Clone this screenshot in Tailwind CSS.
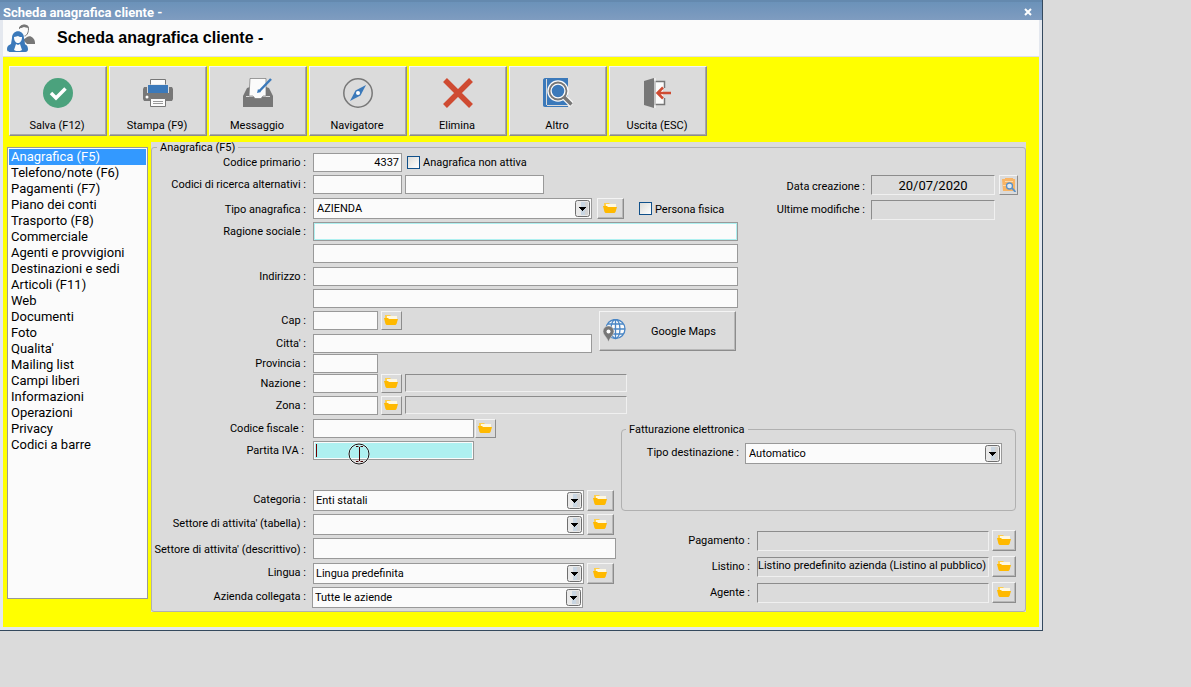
<!DOCTYPE html>
<html lang="it">
<head>
    <meta charset="UTF-8">
    <meta name="viewport" content="width=device-width, initial-scale=1.0">
    <title>Scheda anagrafica cliente</title>
    <script src="https://cdn.jsdelivr.net/npm/@tailwindcss/browser@4"></script>
</head>
<body class="min-h-screen bg-[#dbdbdb] text-black text-[11px] leading-[13px] font-['Tahoma','Roboto','DejaVu_Sans',sans-serif]">

    <!-- Shared icons -->
    <svg class="hidden">
        <symbol id="folder" viewBox="0 0 14 11">
            <path fill="#ffcf4a" d="M1 0h5l1 1h6v4H1z"/>
            <path fill="#fff8e0" d="M3 1h10v3H3z"/>
            <path fill="#ffb900" d="M0 3h4l1 1h9l-1.500 5-1 1H2.500l-1-1z"/>
        </symbol>
        <symbol id="arrow" viewBox="0 0 15 17">
            <rect x=".5" y=".5" width="14" height="16" rx="2" fill="#e9e9e9" stroke="#6e6e6e"/>
            <path fill="#c9d6e2" d="M6 2h4v13H6z"/>
            <path fill="#d3d3d3" d="M10 2h3v13h-3z"/>
            <path fill="#000" d="M4 7h7v1h-1v1H9v1H8v1H7v-1H6V9H5V8H4z"/>
        </symbol>
    </svg>

    <div class="mr-[148px] border-r border-b border-[#34495e]">
        <!-- Title bar -->
        <div class="flex h-5 items-center justify-between border-t-2 border-[#6489ae] bg-linear-to-b from-[#6b92b9] to-[#7f9cc0] pt-0.5 pr-2 pl-[3px]">
            <span class="text-[13px] font-bold text-white">Scheda anagrafica cliente -</span>
            <button type="button" aria-label="Chiudi" class="flex h-3 w-3 items-center justify-center">
                <svg class="h-2 w-2" viewBox="0 0 8 8"><path d="M1 1l6 6M7 1L1 7" stroke="#fff" stroke-width="2"/></svg>
            </button>
        </div>

        <div class="border-x-[3px] border-b-[3px] border-[#e4e8ef]">
            <!-- Header -->
            <header class="flex h-[37px] items-center border-b border-[#e0e0e8] bg-[#fbfbfb] pl-1">
                <svg class="h-7 w-7 shrink-0" viewBox="0 0 28 28">
                    <path fill="#777" d="M20 13c2-1 4-1 6 1 2 2 2 4 2 6h-8l-4-4z"/>
                    <path fill="#fbfbfb" stroke="#777" d="M12.500 5c0-5 9-5 9 0 0 4-2 7-4 7"/>
                    <path fill="#777" d="M12 4c1-4 9-5 10 0-3 0-4-1-5-1-2 1-3 1-5 1z"/>
                    <path fill="#3b79ba" d="M5 14c0-9 12-9 12 0l1 6H4zM0 25c0-4 4-5 7-6h8c3 1 6 2 6 6 0 3-2 3-4 3H4c-2 0-4 0-4-3z"/>
                    <path fill="#fbfbfb" d="M7 13c2 0 3-1 4-1 1 1 3 1 4 1 0 4-2 6-4 6s-4-2-4-6zM9 20l2 1 2-1 2 6-2 1H9l-2-1z"/>
                </svg>
                <h1 class="ml-[22px] font-['Liberation_Sans',Arial,sans-serif] text-base font-bold">Scheda anagrafica cliente -</h1>
            </header>

            <div class="bg-[#ff0] pt-[9px] pb-[15px]">
                <!-- Toolbar -->
                <div class="flex gap-0.5 pl-1.5">
                    <button type="button" class="flex h-[70px] w-[98px] flex-col items-center justify-between border border-t-[#f4f4f4] border-r-[#8c8c8c] border-b-[#8c8c8c] border-l-[#f4f4f4] bg-[#dbdbdb] pt-[11px] pb-[3px] shadow-[inset_-1px_-1px_0_#a8a8a8]">
                        <svg class="h-[30px] w-[30px]" viewBox="0 0 30 30"><circle cx="15" cy="15" r="15" fill="#4ba27d"/><path d="M8 15l5 5 9.500-9.500" fill="none" stroke="#fff" stroke-width="3.500"/></svg>
                        <span class="pr-0.5">Salva (F12)</span>
                    </button>
                    <button type="button" class="flex h-[70px] w-[98px] flex-col items-center justify-between border border-t-[#f4f4f4] border-r-[#8c8c8c] border-b-[#8c8c8c] border-l-[#f4f4f4] bg-[#dbdbdb] pt-[11px] pb-[3px] shadow-[inset_-1px_-1px_0_#a8a8a8]">
                        <svg class="h-[30px] w-[30px]" viewBox="0 0 30 30">
                            <path fill="#777" d="M1 9h3v6h22V9h3l1 2v10l-1 2H1l-1-2V11z"/>
                            <path fill="#fbfbfb" stroke="#777" d="M7.500 6.500v-5h15v5"/>
                            <path fill="#3b79ba" d="M5 7h20v8H5z"/>
                            <path fill="#fbfbfb" stroke="#777" d="M7.500 20.500h15v8h-15z"/>
                            <path stroke="#999" d="M10 23.500h10M10 25.500h10"/>
                            <circle cx="4" cy="19" r="1.500" fill="#fff"/>
                        </svg>
                        <span class="pr-0.5">Stampa (F9)</span>
                    </button>
                    <button type="button" class="flex h-[70px] w-[98px] flex-col items-center justify-between border border-t-[#f4f4f4] border-r-[#8c8c8c] border-b-[#8c8c8c] border-l-[#f4f4f4] bg-[#dbdbdb] pt-[11px] pb-[3px] shadow-[inset_-1px_-1px_0_#a8a8a8]">
                        <svg class="h-[30px] w-[30px]" viewBox="0 0 30 30">
                            <path fill="#777" d="M4 10l3-1v9H3v1h24v-1h-4V9l3 1 4 8v11H0V18z"/>
                            <path fill="#fbfbfb" stroke="#777" stroke-width=".7" d="M7 .5h16V18h-3l-2 2.500h-6L10 18H6z"/>
                            <path stroke="#3b79ba" stroke-width="2.500" d="M16 13.500L28 1"/>
                            <path fill="#3b79ba" d="M14 15l1-4 3 3z"/>
                        </svg>
                        <span class="pr-0.5">Messaggio</span>
                    </button>
                    <button type="button" class="flex h-[70px] w-[98px] flex-col items-center justify-between border border-t-[#f4f4f4] border-r-[#8c8c8c] border-b-[#8c8c8c] border-l-[#f4f4f4] bg-[#dbdbdb] pt-[11px] pb-[3px] shadow-[inset_-1px_-1px_0_#a8a8a8]">
                        <svg class="h-[30px] w-[30px]" viewBox="0 0 30 30">
                            <circle cx="15" cy="15" r="14.200" fill="none" stroke="#777" stroke-width="1.500"/>
                            <path fill="#3b79ba" d="M23 7l-5.500 10.500L7 23l5.500-10.500z"/>
                            <circle cx="15" cy="15" r="2" fill="#fff"/>
                        </svg>
                        <span class="pr-0.5">Navigatore</span>
                    </button>
                    <button type="button" class="flex h-[70px] w-[98px] flex-col items-center justify-between border border-t-[#f4f4f4] border-r-[#8c8c8c] border-b-[#8c8c8c] border-l-[#f4f4f4] bg-[#dbdbdb] pt-[11px] pb-[3px] shadow-[inset_-1px_-1px_0_#a8a8a8]">
                        <svg class="h-[30px] w-[30px]" viewBox="0 0 30 30"><path d="M2 2l26 26M28 2L2 28" stroke="#cf4b32" stroke-width="5.500"/></svg>
                        <span class="pr-0.5">Elimina</span>
                    </button>
                    <button type="button" class="flex h-[70px] w-[98px] flex-col items-center justify-between border border-t-[#f4f4f4] border-r-[#8c8c8c] border-b-[#8c8c8c] border-l-[#f4f4f4] bg-[#dbdbdb] pt-[11px] pb-[3px] shadow-[inset_-1px_-1px_0_#a8a8a8]">
                        <svg class="h-[30px] w-[30px]" viewBox="0 0 30 30">
                            <path fill="#3b79ba" d="M2 0h23v27H4v1h21v1H2c-1.500 0-2-1-2-2V2c0-1 1-2 2-2z"/>
                            <path stroke="#dbdbdb" d="M3.500 1v26"/>
                            <path stroke="#fbfbfb" stroke-width="6" d="M20 18l9 9"/>
                            <circle cx="15" cy="13" r="8.500" fill="#3b79ba" stroke="#fbfbfb" stroke-width="4.500"/>
                            <path stroke="#777" stroke-width="3.500" d="M21 19l7.500 7.500"/>
                            <circle cx="15" cy="13" r="8.500" fill="none" stroke="#777" stroke-width="1.800"/>
                        </svg>
                        <span class="pr-0.5">Altro</span>
                    </button>
                    <button type="button" class="flex h-[70px] w-[98px] flex-col items-center justify-between border border-t-[#f4f4f4] border-r-[#8c8c8c] border-b-[#8c8c8c] border-l-[#f4f4f4] bg-[#dbdbdb] pt-[11px] pb-[3px] shadow-[inset_-1px_-1px_0_#a8a8a8]">
                        <svg class="h-[30px] w-[30px]" viewBox="0 0 30 30">
                            <path fill="#fbfbfb" stroke="#777" stroke-width="1.500" d="M12 3.500h9.500v23H12z"/>
                            <path fill="#777" d="M1 3l10-3v30L1 27z"/>
                            <path stroke="#fbfbfb" d="M12 0v30"/>
                            <path stroke="#dbdbdb" stroke-width="3" d="M21.500 10v10"/>
                            <path fill="none" stroke="#cf4b32" stroke-width="2.500" d="M28 15H16M20 9.500L14.500 15l5.500 5.500"/>
                        </svg>
                        <span class="pr-0.5">Uscita (ESC)</span>
                    </button>
                </div>

                <div class="mt-1.5 flex items-start pr-[13px] pl-1">
                    <!-- Sections list -->
                    <nav class="mt-[5px] h-[452px] w-[141px] shrink-0 border border-[#999] bg-[#fbfbfb] p-px text-[13px] leading-4">
                        <a href="#" class="block bg-[#3399ff] pl-0.5 text-white">Anagrafica (F5)</a>
                        <a href="#" class="block pl-0.5">Telefono/note (F6)</a>
                        <a href="#" class="block pl-0.5">Pagamenti (F7)</a>
                        <a href="#" class="block pl-0.5">Piano dei conti</a>
                        <a href="#" class="block pl-0.5">Trasporto (F8)</a>
                        <a href="#" class="block pl-0.5">Commerciale</a>
                        <a href="#" class="block pl-0.5">Agenti e provvigioni</a>
                        <a href="#" class="block pl-0.5">Destinazioni e sedi</a>
                        <a href="#" class="block pl-0.5">Articoli (F11)</a>
                        <a href="#" class="block pl-0.5">Web</a>
                        <a href="#" class="block pl-0.5">Documenti</a>
                        <a href="#" class="block pl-0.5">Foto</a>
                        <a href="#" class="block pl-0.5">Qualita'</a>
                        <a href="#" class="block pl-0.5">Mailing list</a>
                        <a href="#" class="block pl-0.5">Campi liberi</a>
                        <a href="#" class="block pl-0.5">Informazioni</a>
                        <a href="#" class="block pl-0.5">Operazioni</a>
                        <a href="#" class="block pl-0.5">Privacy</a>
                        <a href="#" class="block pl-0.5">Codici a barre</a>
                    </nav>

                    <form class="ml-[3px] flex-1 bg-[#dbdbdb]">
                        <fieldset class="rounded-[3px] border border-[#b0b0b0] pb-[3px]">
                            <legend class="ml-[5px] h-[11px] px-[3px] leading-[11px]">Anagrafica (F5)</legend>

                            <!-- Main data and dates -->
                            <div class="flex justify-between">
                                <div>
                                    <div class="flex h-[22px]">
                                        <label for="codice" class="mr-[7px] w-[154px] pt-[3px] text-right">Codice primario :</label>
                                        <input id="codice" value="4337" class="h-[19px] w-[89px] border border-[#999] bg-[#fbfbfb] px-0.5 text-right">
                                        <input id="nonattiva" type="checkbox" class="mt-[3px] ml-[5px] h-[13px] w-[13px] appearance-none border border-[#10508a] bg-linear-to-br from-[#dcdcd8] to-white">
                                        <label for="nonattiva" class="ml-[3px] pt-[3px]">Anagrafica non attiva</label>
                                    </div>
                                    <div class="flex h-[23px]">
                                        <label for="alt1" class="mr-[7px] w-[154px] pt-[3px] text-right">Codici di ricerca alternativi :</label>
                                        <input id="alt1" class="h-[19px] w-[89px] border border-[#999] bg-[#fbfbfb]">
                                        <input aria-label="Codice alternativo 2" class="ml-[3px] h-[19px] w-[139px] border border-[#999] bg-[#fbfbfb]">
                                    </div>
                                    <div class="flex h-6">
                                        <label for="tipo" class="mr-[7px] w-[154px] pt-[5px] text-right">Tipo anagrafica :</label>
                                        <div class="relative">
                                            <select id="tipo" class="block h-[21px] w-[279px] appearance-none border border-[#999] bg-[#fbfbfb] pl-[3px]"><option>AZIENDA</option></select>
                                            <svg class="pointer-events-none absolute top-0.5 right-0.5 h-[17px] w-[15px]"><use href="#arrow"/></svg>
                                        </div>
                                        <button type="button" aria-label="Cerca tipo" class="ml-[5px] flex h-[21px] w-[27px] items-center justify-center border border-t-[#f4f4f4] border-r-[#8c8c8c] border-b-[#8c8c8c] border-l-[#f4f4f4] pr-px shadow-[inset_-1px_-1px_0_#b8b8b8]"><svg class="h-[11px] w-3.5"><use href="#folder"/></svg></button>
                                        <input id="fisica" type="checkbox" class="mt-1 ml-[15px] h-[13px] w-[13px] appearance-none border border-[#10508a] bg-linear-to-br from-[#dcdcd8] to-white">
                                        <label for="fisica" class="ml-[3px] pt-[5px]">Persona fisica</label>
                                    </div>
                                    <div class="flex h-[22px]">
                                        <label for="ragione" class="mr-[7px] w-[154px] pt-[3px] text-right">Ragione sociale :</label>
                                        <input id="ragione" class="h-[19px] w-[425px] border border-[#999] bg-[#fbfbfb] shadow-[inset_0_0_0_1px_#aef0f0]">
                                    </div>
                                    <div class="flex h-[23px] pl-[161px]">
                                        <input aria-label="Ragione sociale 2" class="h-[19px] w-[425px] border border-[#999] bg-[#fbfbfb]">
                                    </div>
                                    <div class="flex h-[22px]">
                                        <label for="indirizzo" class="mr-[7px] w-[154px] pt-[3px] text-right">Indirizzo :</label>
                                        <input id="indirizzo" class="h-[19px] w-[425px] border border-[#999] bg-[#fbfbfb]">
                                    </div>
                                    <div class="flex h-[22px] pl-[161px]">
                                        <input aria-label="Indirizzo 2" class="h-[19px] w-[425px] border border-[#999] bg-[#fbfbfb]">
                                    </div>
                                </div>

                                <div class="flex flex-col gap-[5px] pt-[22px] pr-[7px]">
                                    <div class="flex justify-end">
                                        <label for="creazione" class="mr-1.5 pt-[5px]">Data creazione :</label>
                                        <input id="creazione" readonly value="20/07/2020" class="h-5 w-[124px] border border-t-[#8c8c8c] border-r-[#f0f0f0] border-b-[#f0f0f0] border-l-[#8c8c8c] text-center text-[13px]">
                                        <button type="button" aria-label="Dettagli creazione" class="ml-1 flex h-5 w-[19px] items-center justify-center border border-t-[#f4f4f4] border-r-[#8c8c8c] border-b-[#8c8c8c] border-l-[#f4f4f4]">
                                            <svg class="h-3.5 w-3.5" viewBox="0 0 14 14">
                                                <path fill="#f9b565" d="M0 1h3V0h8v1h2v12H1z"/>
                                                <path fill="#fbd9ae" d="M3 3h8v1H3zM1 7h3v1H1z"/>
                                                <circle cx="7.500" cy="8" r="3" fill="#e4eaf0" stroke="#5a92c8" stroke-width="1.300"/>
                                                <path stroke="#5a92c8" stroke-width="1.800" d="M10 10l3.500 4"/>
                                            </svg>
                                        </button>
                                    </div>
                                    <div class="flex justify-end pr-[23px]">
                                        <label for="modifiche" class="mr-1.5 pt-[3px]">Ultime modifiche :</label>
                                        <input id="modifiche" readonly class="h-5 w-[124px] border border-t-[#8c8c8c] border-r-[#f0f0f0] border-b-[#f0f0f0] border-l-[#8c8c8c]">
                                    </div>
                                </div>
                            </div>

                            <!-- Town and map -->
                            <div class="flex">
                                <div>
                                    <div class="flex h-[23px]">
                                        <label for="cap" class="mr-[7px] w-[154px] pt-[3px] text-right">Cap :</label>
                                        <input id="cap" class="h-[19px] w-[65px] border border-[#999] bg-[#fbfbfb]">
                                        <button type="button" aria-label="Cerca cap" class="ml-[3px] flex h-[19px] w-[21px] items-center justify-center border border-t-[#f4f4f4] border-r-[#8c8c8c] border-b-[#8c8c8c] border-l-[#f4f4f4] pr-px"><svg class="h-[11px] w-3.5"><use href="#folder"/></svg></button>
                                    </div>
                                    <div class="flex h-5">
                                        <label for="citta" class="mr-[7px] w-[154px] pt-[3px] text-right">Citta' :</label>
                                        <input id="citta" class="h-[19px] w-[279px] border border-[#999] bg-[#fbfbfb]">
                                    </div>
                                </div>
                                <button type="button" class="ml-[7px] flex h-10 w-[137px] items-center border border-t-[#f4f4f4] border-r-[#8c8c8c] border-b-[#8c8c8c] border-l-[#f4f4f4] pl-[3px] shadow-[inset_-1px_-1px_0_#b8b8b8]">
                                    <svg class="h-6 w-6" viewBox="0 0 24 24">
                                        <circle cx="12.500" cy="10" r="9.500" fill="#fbfbfb"/>
                                        <g fill="none" stroke="#4a86c5" stroke-width="1.300"><circle cx="12.500" cy="10" r="9.500"/><ellipse cx="12.500" cy="10" rx="4.500" ry="9.500"/><path d="M12.500 .5v19M3 10h19M5 5h15M5 15h15"/></g>
                                        <path fill="#777" stroke="#dbdbdb" stroke-width=".6" d="M5.500 7C2 7 0 9.500 0 12.500 0 16 4 18 5.500 23 7 18 11 16 11 12.500 11 9.500 9 7 5.500 7z"/>
                                        <circle cx="5.500" cy="12.500" r="2" fill="#fff"/>
                                    </svg>
                                    <span class="ml-6">Google Maps</span>
                                </button>
                            </div>
                            <div class="flex h-5">
                                <label for="provincia" class="mr-[7px] w-[154px] pt-[3px] text-right">Provincia :</label>
                                <input id="provincia" class="h-[19px] w-[65px] border border-[#999] bg-[#fbfbfb]">
                            </div>
                            <div class="flex h-[22px]">
                                <label for="nazione" class="mr-[7px] w-[154px] pt-[3px] text-right">Nazione :</label>
                                <input id="nazione" class="h-[19px] w-[65px] border border-[#999] bg-[#fbfbfb]">
                                <button type="button" aria-label="Cerca nazione" class="ml-[3px] flex h-[19px] w-[21px] items-center justify-center border border-t-[#f4f4f4] border-r-[#8c8c8c] border-b-[#8c8c8c] border-l-[#f4f4f4] pr-px"><svg class="h-[11px] w-3.5"><use href="#folder"/></svg></button>
                                <input aria-label="Descrizione nazione" readonly class="ml-[3px] h-[18px] w-[222px] border border-t-[#8c8c8c] border-r-[#f0f0f0] border-b-[#f0f0f0] border-l-[#8c8c8c]">
                            </div>
                            <div class="flex h-[23px]">
                                <label for="zona" class="mr-[7px] w-[154px] pt-[3px] text-right">Zona :</label>
                                <input id="zona" class="h-[19px] w-[65px] border border-[#999] bg-[#fbfbfb]">
                                <button type="button" aria-label="Cerca zona" class="ml-[3px] flex h-[19px] w-[21px] items-center justify-center border border-t-[#f4f4f4] border-r-[#8c8c8c] border-b-[#8c8c8c] border-l-[#f4f4f4] pr-px"><svg class="h-[11px] w-3.5"><use href="#folder"/></svg></button>
                                <input aria-label="Descrizione zona" readonly class="ml-[3px] h-[18px] w-[222px] border border-t-[#8c8c8c] border-r-[#f0f0f0] border-b-[#f0f0f0] border-l-[#8c8c8c]">
                            </div>

                            <!-- Tax data, category and defaults -->
                            <div class="flex">
                                <div class="w-[464px] shrink-0">
                                    <div class="flex h-[22px]">
                                        <label for="fiscale" class="mr-[9px] w-[152px] pt-[3px] text-right">Codice fiscale :</label>
                                        <input id="fiscale" class="h-[19px] w-[161px] border border-[#999] bg-[#fbfbfb]">
                                        <button type="button" aria-label="Calcola codice fiscale" class="ml-px flex h-[19px] w-[21px] items-center justify-center border border-t-[#f4f4f4] border-r-[#8c8c8c] border-b-[#8c8c8c] border-l-[#f4f4f4] pr-px"><svg class="h-[11px] w-3.5"><use href="#folder"/></svg></button>
                                    </div>
                                    <div class="flex h-[49px]">
                                        <label for="piva" class="mr-[9px] w-[152px] pt-[3px] text-right">Partita IVA :</label>
                                        <div class="relative">
                                            <input id="piva" class="block h-[19px] w-[161px] border border-[#999] bg-[#aef0f0] shadow-[inset_0_0_0_1px_#fbfbfb]">
                                            <span class="absolute top-[3px] left-[3px] h-[13px] w-px bg-[#700000]"></span>
                                            <svg class="absolute top-0.5 left-[35px] h-[22px] w-[22px]" viewBox="0 0 22 22" fill="none">
                                                <circle cx="11" cy="11" r="10" stroke="#fff" stroke-opacity=".6" stroke-width="2"/>
                                                <circle cx="11" cy="11" r="10" stroke="#111"/>
                                                <path stroke="#400" d="M11.500 4v14M8 3.500h2.500M12.500 3.500H15M8 18.500h2.500M12.500 18.500H15"/>
                                            </svg>
                                        </div>
                                    </div>
                                    <div class="flex h-6">
                                        <label for="categoria" class="mr-[7px] w-[154px] pt-[3px] text-right">Categoria :</label>
                                        <div class="relative">
                                            <select id="categoria" class="block h-[21px] w-[271px] appearance-none border border-[#999] bg-[#fbfbfb] pl-0.5"><option>Enti statali</option></select>
                                            <svg class="pointer-events-none absolute top-0.5 right-0.5 h-[17px] w-[15px]"><use href="#arrow"/></svg>
                                        </div>
                                        <button type="button" aria-label="Cerca categoria" class="ml-[3px] flex h-[21px] w-[27px] items-center justify-center border border-t-[#f4f4f4] border-r-[#8c8c8c] border-b-[#8c8c8c] border-l-[#f4f4f4] pr-px shadow-[inset_-1px_-1px_0_#b8b8b8]"><svg class="h-[11px] w-3.5"><use href="#folder"/></svg></button>
                                    </div>
                                    <div class="flex h-6">
                                        <label for="settore" class="mr-[7px] w-[154px] pt-[3px] text-right">Settore di attivita' (tabella) :</label>
                                        <div class="relative">
                                            <select id="settore" class="block h-[21px] w-[271px] appearance-none border border-[#999] bg-[#fbfbfb] pl-0.5"><option></option></select>
                                            <svg class="pointer-events-none absolute top-0.5 right-0.5 h-[17px] w-[15px]"><use href="#arrow"/></svg>
                                        </div>
                                        <button type="button" aria-label="Cerca settore" class="ml-[3px] flex h-[21px] w-[27px] items-center justify-center border border-t-[#f4f4f4] border-r-[#8c8c8c] border-b-[#8c8c8c] border-l-[#f4f4f4] pr-px shadow-[inset_-1px_-1px_0_#b8b8b8]"><svg class="h-[11px] w-3.5"><use href="#folder"/></svg></button>
                                    </div>
                                    <div class="flex h-[25px]">
                                        <label for="descrittivo" class="mr-[7px] flex w-[154px] justify-end pt-[5px] whitespace-nowrap">Settore di attivita' (descrittivo) :</label>
                                        <input id="descrittivo" class="h-[21px] w-[303px] border border-[#999] bg-[#fbfbfb]">
                                    </div>
                                    <div class="flex h-6">
                                        <label for="lingua" class="mr-[7px] w-[154px] pt-[3px] text-right">Lingua :</label>
                                        <div class="relative">
                                            <select id="lingua" class="block h-[21px] w-[271px] appearance-none border border-[#999] bg-[#fbfbfb] pl-0.5"><option>Lingua predefinita</option></select>
                                            <svg class="pointer-events-none absolute top-0.5 right-0.5 h-[17px] w-[15px]"><use href="#arrow"/></svg>
                                        </div>
                                        <button type="button" aria-label="Cerca lingua" class="ml-[3px] flex h-[21px] w-[27px] items-center justify-center border border-t-[#f4f4f4] border-r-[#8c8c8c] border-b-[#8c8c8c] border-l-[#f4f4f4] pr-px shadow-[inset_-1px_-1px_0_#b8b8b8]"><svg class="h-[11px] w-3.5"><use href="#folder"/></svg></button>
                                    </div>
                                    <div class="flex h-[21px]">
                                        <label for="azienda" class="mr-1.5 w-[154px] pt-[3px] text-right">Azienda collegata :</label>
                                        <div class="relative">
                                            <select id="azienda" class="block h-[21px] w-[271px] appearance-none border border-[#999] bg-[#fbfbfb] pl-0.5"><option>Tutte le aziende</option></select>
                                            <svg class="pointer-events-none absolute top-0.5 right-0.5 h-[17px] w-[15px]"><use href="#arrow"/></svg>
                                        </div>
                                    </div>
                                </div>

                                <div class="ml-[5px] flex-1 pt-[5px] pr-[9px]">
                                    <fieldset class="h-[87px] rounded-[4px] border border-[#b0b0b0] pr-[13px]">
                                        <legend class="ml-1 h-[11px] px-[3px] leading-[11px]">Fatturazione elettronica</legend>
                                        <div class="flex justify-end pt-2">
                                            <label for="destinazione" class="mr-1.5 pt-[3px]">Tipo destinazione :</label>
                                            <div class="relative">
                                                <select id="destinazione" class="block h-[21px] w-[257px] appearance-none border border-[#999] bg-[#fbfbfb] pl-[3px]"><option>Automatico</option></select>
                                                <svg class="pointer-events-none absolute top-0.5 right-0.5 h-[17px] w-[15px]"><use href="#arrow"/></svg>
                                            </div>
                                        </div>
                                    </fieldset>
                                    <div class="mt-[19px] flex flex-col gap-[5px]">
                                        <div class="flex items-center justify-end">
                                            <label for="pagamento" class="mr-[7px]">Pagamento :</label>
                                            <input id="pagamento" readonly class="h-5 w-[232px] border border-t-[#8c8c8c] border-r-[#f0f0f0] border-b-[#f0f0f0] border-l-[#8c8c8c]">
                                            <button type="button" aria-label="Cerca pagamento" class="ml-[3px] flex h-[21px] w-6 items-center justify-center border border-t-[#f4f4f4] border-r-[#8c8c8c] border-b-[#8c8c8c] border-l-[#f4f4f4] shadow-[inset_-1px_-1px_0_#b8b8b8]"><svg class="h-[11px] w-3.5"><use href="#folder"/></svg></button>
                                        </div>
                                        <div class="flex items-center justify-end">
                                            <label for="listino" class="mr-[7px]">Listino :</label>
                                            <input id="listino" readonly value="Listino predefinito azienda (Listino al pubblico)" class="h-5 w-[232px] border border-t-[#8c8c8c] border-r-[#f0f0f0] border-b-[#f0f0f0] border-l-[#8c8c8c] pb-0.5">
                                            <button type="button" aria-label="Cerca listino" class="ml-[3px] flex h-[21px] w-6 items-center justify-center border border-t-[#f4f4f4] border-r-[#8c8c8c] border-b-[#8c8c8c] border-l-[#f4f4f4] shadow-[inset_-1px_-1px_0_#b8b8b8]"><svg class="h-[11px] w-3.5"><use href="#folder"/></svg></button>
                                        </div>
                                        <div class="flex items-center justify-end">
                                            <label for="agente" class="mr-[7px]">Agente :</label>
                                            <input id="agente" readonly class="h-5 w-[232px] border border-t-[#8c8c8c] border-r-[#f0f0f0] border-b-[#f0f0f0] border-l-[#8c8c8c]">
                                            <button type="button" aria-label="Cerca agente" class="ml-[3px] flex h-[21px] w-6 items-center justify-center border border-t-[#f4f4f4] border-r-[#8c8c8c] border-b-[#8c8c8c] border-l-[#f4f4f4] shadow-[inset_-1px_-1px_0_#b8b8b8]"><svg class="h-[11px] w-3.5"><use href="#folder"/></svg></button>
                                        </div>
                                    </div>
                                </div>
                            </div>
                        </fieldset>
                    </form>
                </div>
            </div>
        </div>
    </div>
</body>
</html>
